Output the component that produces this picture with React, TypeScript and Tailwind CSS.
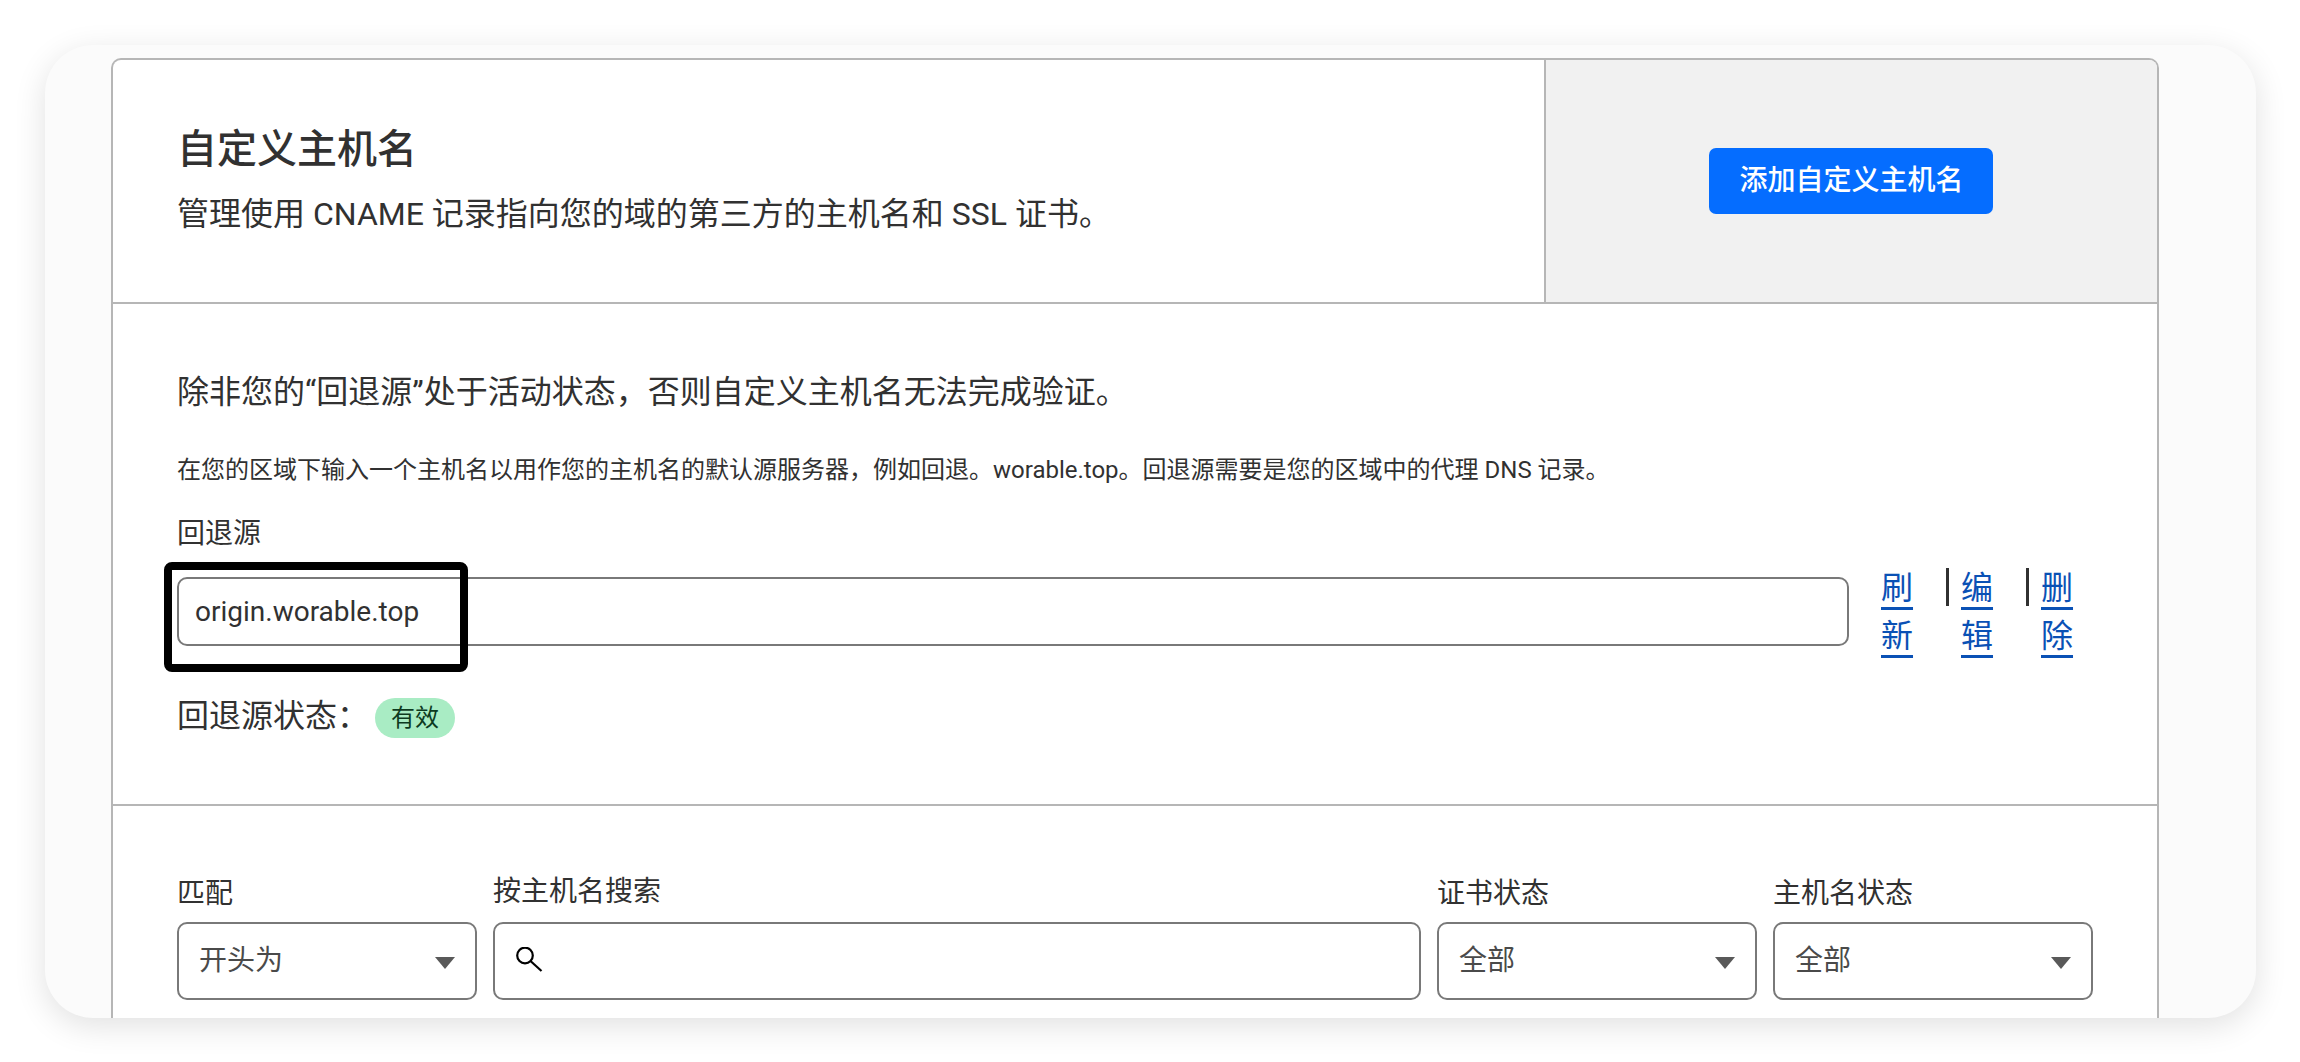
import type { ReactNode } from "react";

const links = ["刷新", "编辑", "删除"];

type SelectFieldProps = {
  id: string;
  label: string;
  value: string;
  className: string;
};

function SelectField({ id, label, value, className }: SelectFieldProps) {
  return (
    <div className={`flex flex-col gap-1 ${className}`}>
      <label htmlFor={id} className="text-[28px] leading-[48px]">
        {label}
      </label>
      <div className="grid items-center">
        <select
          id={id}
          defaultValue={value}
          className="col-start-1 row-start-1 h-[78px] w-full appearance-none rounded-[10px] border-2 border-[#797979] bg-white px-5 text-[28px] text-[#4a4a4a]"
        >
          <option>{value}</option>
        </select>
        <svg
          viewBox="0 0 20 12"
          className="pointer-events-none col-start-1 row-start-1 mr-[22px] mt-1 h-3 w-5 justify-self-end"
          aria-hidden="true"
        >
          <path d="M0 0h20L10 12z" fill="#595959" />
        </svg>
      </div>
    </div>
  );
}

function Section({ children }: { children: ReactNode }) {
  return (
    <section className="border-b-2 border-[#b6b6b6] px-16 py-16">
      {children}
    </section>
  );
}

function App() {
  return (
    <main className="bg-white pb-11 pl-[45px] pr-11 pt-[45px] font-['Roboto','Noto_Sans_CJK_SC',sans-serif] text-[#313131]">
      <div className="overflow-hidden rounded-[48px] bg-[#fbfbfb] pl-[66px] pr-[97px] pt-[13px] shadow-[0_8px_32px_rgba(0,0,0,0.12)]">
        <div className="overflow-hidden rounded-t-[10px] border-2 border-b-0 border-[#b6b6b6] bg-white">
          <header className="flex border-b-2 border-[#b6b6b6]">
            <div className="grow px-16 pb-16 pt-[66px]">
              <h1 className="text-[40px] font-medium leading-[48px]">
                自定义主机名
              </h1>
              <p className="mt-4 text-[32px] leading-[48px]">
                管理使用 CNAME 记录指向您的域的第三方的主机名和 SSL 证书。
              </p>
            </div>
            <div className="flex w-[30%] shrink-0 items-center justify-center border-l-2 border-[#b6b6b6] bg-[#f1f1f1]">
              <button
                type="button"
                className="rounded-[7px] bg-[#056dff] px-[30px] py-3 text-[28px] font-medium leading-[42px] text-white"
              >
                添加自定义主机名
              </button>
            </div>
          </header>

          <Section>
            <p className="text-[32px] leading-[48px]">
              除非您的“回退源”处于活动状态，否则自定义主机名无法完成验证。
            </p>
            <p className="mt-9 text-2xl leading-[36px]">
              在您的区域下输入一个主机名以用作您的主机名的默认源服务器，例如回退。worable.top。回退源需要是您的区域中的代理
              DNS 记录。
            </p>
            <label
              htmlFor="fallback-origin"
              className="mt-[26px] block text-[28px] leading-[40px]"
            >
              回退源
            </label>
            <div className="mt-[23px] flex h-[69px]">
              <div className="relative grow">
                <input
                  id="fallback-origin"
                  type="text"
                  defaultValue="origin.worable.top"
                  className="h-[69px] w-full rounded-[10px] border-2 border-[#797979] bg-white px-4 text-[28px]"
                />
                {/* highlight around the origin value */}
                <div className="pointer-events-none absolute -left-[13px] -top-[15px] h-[110px] w-[304px] rounded-lg border-8 border-black" />
              </div>
              <nav className="-mt-[13px] ml-8 flex w-[212px] shrink-0 text-[32px] leading-[48px]">
                {links.map((link, index) => (
                  <div key={link} className="flex w-20 shrink-0">
                    <a
                      href="#"
                      className="w-8 break-all text-[#0a51b5] underline decoration-[3px] underline-offset-[8px]"
                    >
                      {link}
                    </a>
                    {index < links.length - 1 && (
                      <span className="ml-[33px] mt-1 h-[38px] w-[3px] bg-[#313131]" />
                    )}
                  </div>
                ))}
              </nav>
            </div>
            <p className="mt-[46px] flex items-center gap-[6px] text-[32px] leading-[48px]">
              回退源状态：
              <span className="mt-1 rounded-full bg-[#a9ecc4] px-4 text-2xl leading-[40px] text-[#0d3a1f]">
                有效
              </span>
            </p>
          </Section>

          <form className="flex items-start gap-4 px-16 pb-[18px] pt-16">
            <SelectField
              id="match"
              label="匹配"
              value="开头为"
              className="w-[300px]"
            />
            <div className="flex grow flex-col gap-2">
              <label htmlFor="search" className="text-[28px] leading-[44px]">
                按主机名搜索
              </label>
              <div className="flex h-[78px] items-center gap-4 rounded-[10px] border-2 border-[#797979] bg-white px-5">
                <svg
                  viewBox="0 0 28 28"
                  className="h-7 w-7 shrink-0"
                  fill="none"
                  stroke="#000"
                  strokeWidth="2.200"
                  aria-hidden="true"
                >
                  <circle cx="10" cy="8.500" r="7.800" />
                  <path d="M15.500 14L26.500 24" />
                </svg>
                <input
                  id="search"
                  type="search"
                  className="h-full min-w-0 grow text-[28px] outline-none"
                />
              </div>
            </div>
            <SelectField
              id="cert-status"
              label="证书状态"
              value="全部"
              className="w-[320px]"
            />
            <SelectField
              id="host-status"
              label="主机名状态"
              value="全部"
              className="w-[320px]"
            />
          </form>
        </div>
      </div>
    </main>
  );
}

export default App;
